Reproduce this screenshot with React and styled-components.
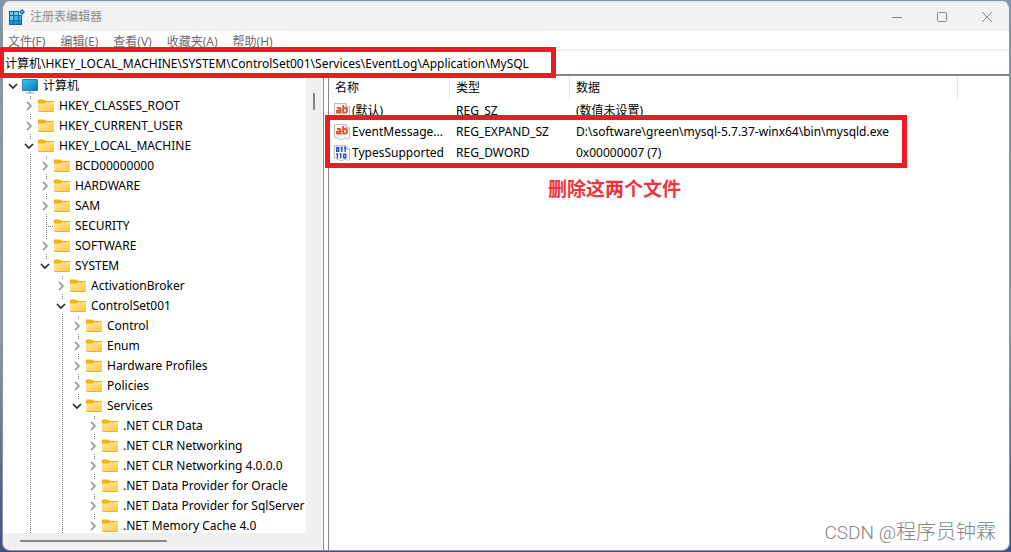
import React from 'react'
import styled, { createGlobalStyle } from 'styled-components'

const menus = ['文件(F)', '编辑(E)', '查看(V)', '收藏夹(A)', '帮助(H)']

// guides: levels whose dotted line keeps running past the row
const nodes = [
    { name: '计算机', level: 0, open: true, computer: true },
    { name: 'HKEY_CLASSES_ROOT', level: 1 },
    { name: 'HKEY_CURRENT_USER', level: 1 },
    { name: 'HKEY_LOCAL_MACHINE', level: 1, open: true },
    { name: 'BCD00000000', level: 2, guides: [1] },
    { name: 'HARDWARE', level: 2, guides: [1] },
    { name: 'SAM', level: 2, guides: [1] },
    { name: 'SECURITY', level: 2, guides: [1], leaf: true },
    { name: 'SOFTWARE', level: 2, guides: [1] },
    { name: 'SYSTEM', level: 2, guides: [1], open: true, last: true },
    { name: 'ActivationBroker', level: 3, guides: [1] },
    { name: 'ControlSet001', level: 3, guides: [1], open: true },
    { name: 'Control', level: 4, guides: [1, 3] },
    { name: 'Enum', level: 4, guides: [1, 3] },
    { name: 'Hardware Profiles', level: 4, guides: [1, 3] },
    { name: 'Policies', level: 4, guides: [1, 3] },
    { name: 'Services', level: 4, guides: [1, 3], open: true, last: true },
    { name: '.NET CLR Data', level: 5, guides: [1, 3] },
    { name: '.NET CLR Networking', level: 5, guides: [1, 3] },
    { name: '.NET CLR Networking 4.0.0.0', level: 5, guides: [1, 3] },
    { name: '.NET Data Provider for Oracle', level: 5, guides: [1, 3] },
    { name: '.NET Data Provider for SqlServer', level: 5, guides: [1, 3] },
    { name: '.NET Memory Cache 4.0', level: 5, guides: [1, 3] },
]

const values = [
    { name: '(默认)', type: 'REG_SZ', data: '(数值未设置)' },
    { name: 'EventMessage...', type: 'REG_EXPAND_SZ', data: 'D:\\software\\green\\mysql-5.7.37-winx64\\bin\\mysqld.exe' },
    { name: 'TypesSupported', type: 'REG_DWORD', data: '0x00000007 (7)', binary: true },
]

function RegeditIcon() {
    return (
        <svg width="16" height="16" viewBox="0 0 16 16">
            <path d="M0 2h10v4h3v10H0z" fill="#0a6a9f" />
            <path d="M1 3h3v3H1zM5 3h4v3H5zM1 7h3v4H1z" fill="#5fd0f5" />
            <path d="M5 7h4v4H5zM10 7h2v4h-2z" fill="#35b2e6" />
            <path d="M1 12h3v3H1zM5 12h4v3H5zM10 12h2v3h-2z" fill="#1b93cf" />
            <path d="M13 0l3 3-3 3-3-3z" fill="#0a6a9f" />
            <path d="M13 1.500L14.500 3 13 4.500 11.500 3z" fill="#45c0f0" />
        </svg>
    )
}

function ComputerIcon() {
    return (
        <svg width="16" height="16" viewBox="0 0 16 16">
            <defs>
                <linearGradient id="screen" x1="0" y1="0" x2="1" y2="1">
                    <stop offset="0" stopColor="#35cdea" />
                    <stop offset="1" stopColor="#0f6fba" />
                </linearGradient>
            </defs>
            <rect x="0.500" y="1.500" width="15" height="11" rx="0.500" fill="url(#screen)" stroke="#2183a8" />
            <path d="M7 13h2v2H7z" fill="#b0b8bd" />
            <path d="M4 15h8" stroke="#8d979d" />
        </svg>
    )
}

function FolderIcon() {
    return (
        <svg width="16" height="16" viewBox="0 0 16 16">
            <defs>
                <linearGradient id="folder" x1="0" y1="0" x2="1" y2="1">
                    <stop offset="0" stopColor="#ffe7a0" />
                    <stop offset="1" stopColor="#ffca42" />
                </linearGradient>
            </defs>
            <path d="M0 2.500Q0 1.500 1 1.500H6L8 3H15Q16 3 16 4V7H0z" fill="#f3b013" />
            <path d="M0 5.500H7L8.500 4H16V13Q16 14 15 14H1Q0 14 0 13z" fill="url(#folder)" />
            <path d="M0.500 13.500H15.500" stroke="#efb02c" />
        </svg>
    )
}

function ValueIcon({ binary }) {
    return (
        <svg width="16" height="16" viewBox="0 0 16 16">
            <path d="M0.500 0.500H12L15.500 4V14.500L13.500 15.500L11 14L8.500 15.500L6 15.500L4 14L0.500 13.500z" fill="#f8f8f8" stroke="#bdbdbd" />
            <path d="M12 0.500V4H15.500" fill="#fff" stroke="#a0a0a0" />
            {binary ? (
                <g fill="none" stroke="#2a48d8" strokeWidth="1.400">
                    <path d="M2.700 2.700h2v3.600h-2zM6.600 2.500h1.200v4.500M10 2.500h1.200v4.500" />
                    <path d="M2.200 9h1.200v4.500M5.600 9h1.200v4.500M9.700 9.200h2v3.600h-2z" />
                </g>
            ) : (
                <g fill="none" stroke="#d8502c" strokeWidth="1.800">
                    <path d="M2.900 4.900h2.300q1.400 0 1.400 1.300V10.500M6.600 7.400H4.200q-1.500 0-1.500 1.200t1.400 1.100Q5.800 9.700 6.600 8.600" />
                    <path d="M9.200 2V10.500M9.200 6q.6-1.100 1.900-1.100 1.900 0 1.900 2.400t-1.900 2.400Q9.800 9.700 9.200 8.800" />
                </g>
            )}
        </svg>
    )
}

function Chevron({ open }) {
    return (
        <svg width="10" height="10" viewBox="0 0 10 10" fill="none">
            {open
                ? <path d="M1 3l4 4 4-4" stroke="#2b2b2b" strokeWidth="1.700" />
                : <path d="M3 1l4 4-4 4" stroke="#8f8f8f" strokeWidth="1.600" />}
        </svg>
    )
}

function TreeNode({ node }) {
    const cells = []
    for (let i = 0; i < node.level; i++) {
        cells.push(<Guide key={i} $line={(node.guides || []).includes(i)} />)
    }
    return (
        <NodeRow>
            {cells}
            <Guide $line={node.level > 0} $branch={node.leaf} $half={node.last}>
                {!node.leaf && (
                    <Toggle type="button" aria-label={node.name}>
                        <Chevron open={node.open} />
                    </Toggle>
                )}
            </Guide>
            <NodeLabel>
                {node.computer ? <ComputerIcon /> : <FolderIcon />}
                <span>{node.name}</span>
            </NodeLabel>
        </NodeRow>
    )
}

function App() {
    return (
        <Desktop>
            <GlobalStyle />
            <Window>
                <TitleBar>
                    <RegeditIcon />
                    <Title>注册表编辑器</Title>
                    <ControlButton type="button" aria-label="最小化">
                        <svg width="12" height="12" viewBox="0 0 12 12"><path d="M1 6.500h10" /></svg>
                    </ControlButton>
                    <ControlButton type="button" aria-label="最大化">
                        <svg width="12" height="12" viewBox="0 0 12 12"><rect x="1.500" y="1.500" width="9" height="9" rx="1" /></svg>
                    </ControlButton>
                    <ControlButton type="button" aria-label="关闭">
                        <svg width="12" height="12" viewBox="0 0 12 12"><path d="M1 1l10 10M11 1L1 11" /></svg>
                    </ControlButton>
                </TitleBar>
                <MenuBar>
                    {menus.map((m) => <MenuButton type="button" key={m}>{m}</MenuButton>)}
                </MenuBar>
                <Address
                    aria-label="地址"
                    defaultValue={'计算机\\HKEY_LOCAL_MACHINE\\SYSTEM\\ControlSet001\\Services\\EventLog\\Application\\MySQL'}
                />
                <Panes>
                    <TreePane>
                        <TreeList>
                            {nodes.map((n) => <TreeNode key={n.name} node={n} />)}
                        </TreeList>
                        <VScroll><Thumb $vertical /></VScroll>
                        <HScroll><Thumb /></HScroll>
                    </TreePane>
                    <ValuePane>
                        <ValueTable>
                            <colgroup>
                                <col width="121" />
                                <col width="120" />
                                <col width="388" />
                                <col />
                            </colgroup>
                            <thead>
                                <tr>
                                    <th>名称</th>
                                    <th>类型</th>
                                    <th>数据</th>
                                    <td />
                                </tr>
                            </thead>
                            <tbody>
                                {values.map((v) => (
                                    <tr key={v.name}>
                                        <td>
                                            <ValueName>
                                                <ValueIcon binary={v.binary} />
                                                <span>{v.name}</span>
                                            </ValueName>
                                        </td>
                                        <td>{v.type}</td>
                                        <td>{v.data}</td>
                                        <td />
                                    </tr>
                                ))}
                            </tbody>
                        </ValueTable>
                    </ValuePane>
                </Panes>
            </Window>
            <AddressMark />
            <ValuesMark />
            <Note>删除这两个文件</Note>
            <Watermark><span>CSDN @</span>程序员钟霖</Watermark>
        </Desktop>
    )
}

export default App

const GlobalStyle = createGlobalStyle`
    * {
        box-sizing: border-box;
    }
    body {
        margin: 0;
        font-family: "Noto Sans", "Noto Sans CJK SC", sans-serif;
        font-size: 12px;
        line-height: 20px;
        color: #000;
    }
    svg {
        display: block;
        flex: none;
    }
    button, input {
        font: inherit;
        border: none;
        padding: 0;
        background: none;
    }
`

const Desktop = styled.div`
    position: relative;
    height: 100vh;
    padding: 1px 1px 1px 2px;
    overflow: hidden;
    background: linear-gradient(#8196ab, #8c9bab 60%, #3c4f86);
`

const Window = styled.main`
    height: 100%;
    display: flex;
    flex-direction: column;
    overflow: hidden;
    background: #fff;
    border: 1px solid #8a95a0;
    border-top-color: #e6e6e6;
    border-radius: 8px;
`

const TitleBar = styled.header`
    display: flex;
    align-items: center;
    flex: none;
    height: 29px;
    padding-left: 6px;
    background: #f2f2f2;
`

const Title = styled.span`
    flex: 1;
    padding-left: 5px;
    color: #8c8c8c;
`

const ControlButton = styled.button`
    width: 45px;
    height: 28px;
    display: flex;
    align-items: center;
    justify-content: center;

    svg {
        fill: none;
        stroke: #888;
    }
`

const MenuBar = styled.nav`
    display: flex;
    gap: 15px;
    flex: none;
    height: 20px;
    padding-left: 5px;
    border-bottom: 2px solid #f0f0f0;
`

const MenuButton = styled.button`
    line-height: 18px;
    padding-top: 2px;
    color: #6d6d6d;
`

const Address = styled.input`
    flex: none;
    width: 100%;
    height: 23px;
    padding-left: 2px;
    outline: none;
`

const Panes = styled.div`
    flex: 1;
    display: flex;
    gap: 4px;
    min-height: 0;
`

const TreePane = styled.section`
    flex: none;
    width: 321px;
    display: grid;
    grid-template-columns: 1fr 16px;
    grid-template-rows: 1fr 16px;
    min-height: 0;
    padding: 0 1px 1px 0;
    border-top: 2px solid #828790;
    border-right: 1px solid #828790;
`

const TreeList = styled.ul`
    margin: 0;
    padding: 0 0 0 2px;
    min-height: 0;
    list-style: none;
    overflow: hidden;
`

const NodeRow = styled.li`
    display: flex;
    height: 20px;
    white-space: nowrap;
`

const Guide = styled.span`
    position: relative;
    flex: none;
    display: flex;
    align-items: center;
    justify-content: center;
    width: 16px;
    ${props => props.$line && `
        background: repeating-linear-gradient(#777 0 1px, transparent 1px 2px) 9px 0 / 1px ${props.$half ? '50%' : '100%'} no-repeat;
    `}
    ${props => props.$branch && `
        &::after {
            content: "";
            position: absolute;
            left: 11px;
            top: 10px;
            width: 5px;
            height: 1px;
            background: repeating-linear-gradient(90deg, #777 0 1px, transparent 1px 2px);
        }
    `}
`

const Toggle = styled.button`
    padding: 2px 0;
    background: #fff;
`

const NodeLabel = styled.span`
    display: flex;
    align-items: center;
    gap: 5px;
    padding-left: 1px;
`

const VScroll = styled.div`
    display: flex;
    justify-content: center;
    padding-top: 17px;
    background: #f0f0f0;
`

const HScroll = styled.div`
    grid-column: 1 / 3;
    display: flex;
    align-items: center;
    padding-left: 17px;
    background: #f0f0f0;
`

const Thumb = styled.div`
    width: ${props => props.$vertical ? '2px' : '147px'};
    height: ${props => props.$vertical ? '17px' : '2px'};
    border-radius: 1px;
    background: #868686;
`

const ValuePane = styled.section`
    flex: 1;
    min-width: 0;
    overflow: hidden;
    border-top: 2px solid #828790;
    border-left: 1px solid #828790;
`

const ValueTable = styled.table`
    width: 100%;
    table-layout: fixed;
    border-collapse: separate;
    border-spacing: 0;
    text-align: left;

    th, td {
        height: 21px;
        padding: 0 0 0 6px;
        font-weight: normal;
        white-space: nowrap;
    }

    th {
        height: 24px;
        border-right: 1px solid #e5e5e5;
    }
`

const ValueName = styled.div`
    display: flex;
    align-items: center;
    gap: 2px;
    margin-left: -1px;
`

// red frames drawn over the window
const Mark = styled.div`
    position: absolute;
    border: 5px solid #ed1c24;
    pointer-events: none;
`

const AddressMark = styled(Mark)`
    left: 0;
    top: 47px;
    width: 556px;
    height: 31px;
    border-left-width: 4px;
`

const ValuesMark = styled(Mark)`
    left: 325px;
    top: 115px;
    width: 582px;
    height: 53px;
`

const Note = styled.div`
    position: absolute;
    left: 548px;
    top: 176px;
    font-size: 19px;
    line-height: 26px;
    font-weight: bold;
    color: #f0323c;
`

const Watermark = styled.div`
    position: absolute;
    right: 15px;
    bottom: 6px;
    font-size: 20px;
    line-height: 26px;
    font-weight: 300;
    color: #868686;

    span {
        font-family: Roboto, sans-serif;
        font-size: 19px;
    }
`
